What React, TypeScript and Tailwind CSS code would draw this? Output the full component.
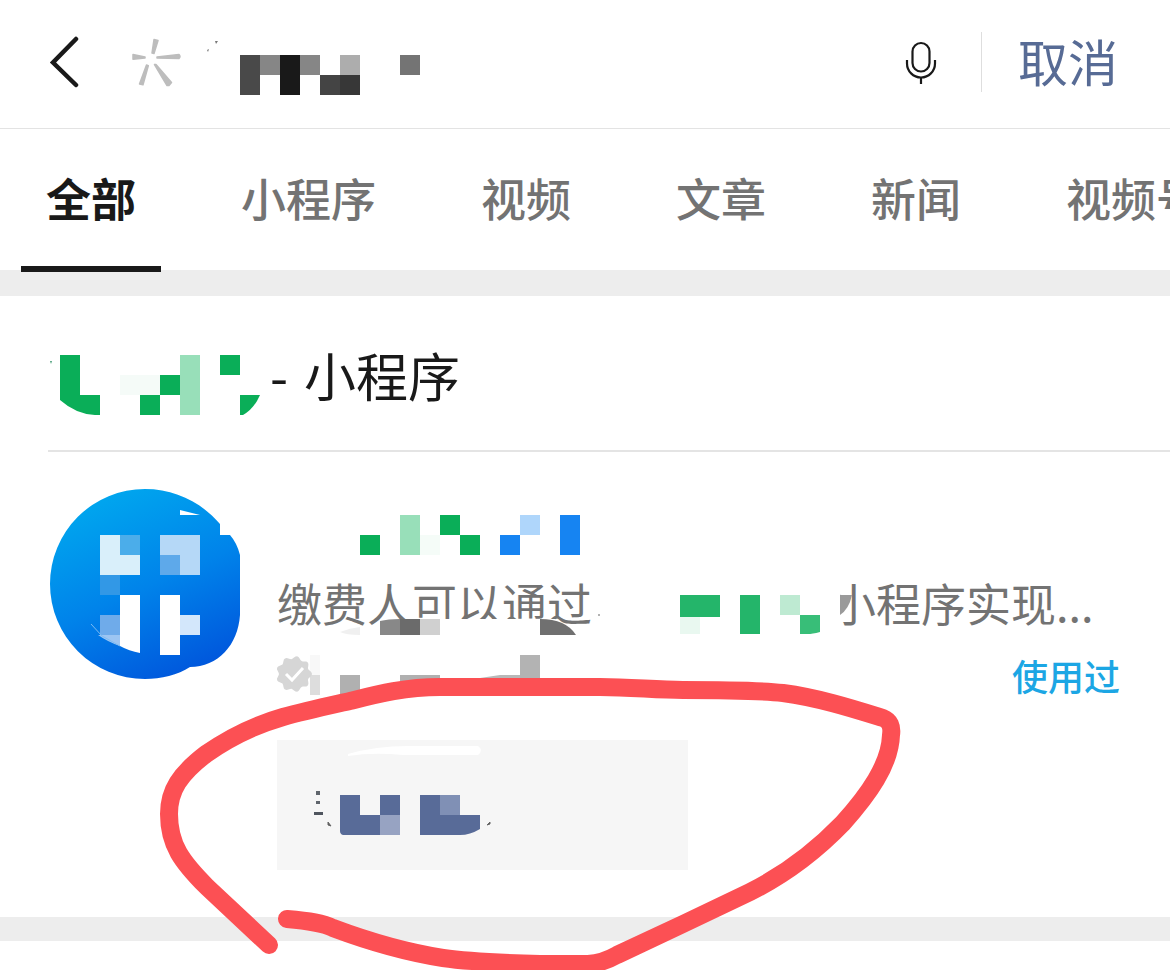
import type { ReactNode } from 'react'
import { useState } from 'react'

type Block = [x: number, y: number, w: number, h: number, fill: string]

const TABS = ['全部', '小程序', '视频', '文章', '新闻', '视频号']

const QUERY_BLOCKS: Block[] = [
  [240, 55, 20, 40, '#494949'],
  [260, 55, 20, 20, '#868686'],
  [280, 55, 20, 40, '#191919'],
  [300, 55, 20, 20, '#868686'],
  [340, 55, 20, 20, '#adadad'],
  [320, 75, 20, 20, '#444444'],
  [340, 75, 20, 20, '#373737'],
  [400, 55, 20, 20, '#747474'],
]

const HEADING_BLOCKS: Block[] = [
  [120, 375, 40, 20, '#f5fbf8'],
  [160, 375, 20, 20, '#0aae58'],
  [140, 395, 20, 20, '#0aae58'],
  [180, 355, 20, 60, '#98dfb9'],
  [220, 355, 20, 20, '#0aae58'],
]

const TITLE_BLOCKS: Block[] = [
  [360, 535, 20, 20, '#0aae58'],
  [400, 515, 20, 40, '#98dfb9'],
  [420, 535, 20, 20, '#f5fcf8'],
  [440, 515, 20, 20, '#0aae58'],
  [460, 535, 20, 20, '#0aae58'],
  [500, 535, 20, 20, '#1684f2'],
  [520, 515, 20, 20, '#afd6fb'],
  [560, 515, 20, 40, '#1684f2'],
]

const DESC_BLOCKS: Block[] = [
  [380, 619, 20, 16, '#888888'],
  [400, 619, 20, 16, '#6b6b6b'],
  [420, 619, 20, 16, '#d0d0d0'],
  [680, 595, 40, 22, '#24b56a'],
  [680, 617, 20, 17, '#e9f8f0'],
  [740, 595, 20, 39, '#24b56a'],
  [780, 595, 20, 20, '#beead2'],
]

const LOGO_BLOCKS: Block[] = [
  [100, 535, 20, 40, '#d9effa'],
  [120, 535, 20, 20, '#4badea'],
  [120, 555, 20, 20, '#d9effa'],
  [160, 535, 40, 20, '#b5d8f7'],
  [180, 555, 20, 20, '#b5d8f7'],
  [160, 555, 20, 20, '#5ea9ea'],
  [100, 575, 20, 20, '#3298e6'],
  [100, 615, 20, 20, '#6fabea'],
  [160, 595, 20, 60, '#ffffff'],
  [180, 615, 20, 20, '#d3e7fb'],
]

const META_BLOCKS: Block[] = [
  [310, 655, 10, 20, '#f8f8f8'],
  [310, 675, 10, 20, '#dddddd'],
  [340, 675, 20, 20, '#b0b0b0'],
  [400, 675, 40, 20, '#b0b0b0'],
  [520, 655, 20, 40, '#b3b3b3'],
]

const ACTION_BLOCKS: Block[] = [
  [380, 795, 20, 20, '#586b98'],
  [380, 815, 20, 20, '#97a3c2'],
  [440, 795, 20, 20, '#8090b5'],
  [316, 791, 4, 4, '#5f656c'],
  [316, 801, 4, 3, '#5f656c'],
  [314, 812, 9, 3, '#4f555e'],
]

function Mosaic({ blocks, viewBox, className, children }: {
  blocks: Block[]
  viewBox: string
  className: string
  children?: ReactNode
}) {
  return (
    <svg viewBox={viewBox} className={className} aria-hidden="true">
      {blocks.map(([x, y, w, h, fill], i) => (
        <rect key={i} x={x} y={y} width={w} height={h} fill={fill} />
      ))}
      {children}
    </svg>
  )
}

function SearchHeader() {
  return (
    <header className="flex h-[129px] items-center border-b border-[#e3e3e3] pr-[52px] pb-1 pl-[49px]">
      <button aria-label="返回" className="shrink-0">
        <svg viewBox="0 0 32 52" className="h-[52px] w-8" fill="none" stroke="#191919" strokeWidth="4.500" strokeLinecap="round">
          <path d="M27 3 4 26.500 27 49" />
        </svg>
      </button>
      <Mosaic blocks={QUERY_BLOCKS} viewBox="130 30 292 64" className="ml-[49px] h-16 w-[292px] shrink-0 overflow-visible">
        <g fill="#bdbdbd" stroke="#bdbdbd" strokeLinejoin="round" strokeWidth="1.500">
          <path d="M154 39.500l4 1-4 13-2-.5z" />
          <path d="M133 54.500l12 2.500v1l-12 1.200z" />
          <path d="M157 57l22-2.500q2 2 0 4l-22-.5z" />
          <path d="M146.500 65l1.800.8-5.300 19-3.500-.8z" />
          <path d="M154.500 64.500l1.500 0 15.500 18-2.500 3-2 0z" />
        </g>
        <path d="M215 41l3 0-2 3zM207 50l2-1-1 3z" fill="#777" />
      </Mosaic>
      <div className="ml-auto flex items-center">
        <button aria-label="语音输入">
          <svg viewBox="904 38 34 48" className="h-12 w-[34px]" fill="none" stroke="#191919" strokeWidth="2.200">
            <rect x="912.500" y="43" width="17" height="28.500" rx="8.500" />
            <path d="M907 60v3.500a14 14 0 0 0 28 0V60M921 77.500V84" />
          </svg>
        </button>
        <div className="mr-9 ml-[43px] h-[60px] w-px bg-[#dedede]" />
        <button className="pb-1 text-[50px] leading-[60px] text-[#576b95]">取消</button>
      </div>
    </header>
  )
}

function Tabs() {
  const [active, setActive] = useState(TABS[0])

  return (
    <nav className="flex h-[141px] gap-[55px] overflow-x-clip pl-[21px]">
      {TABS.map((tab) => (
        <button
          key={tab}
          onClick={() => setActive(tab)}
          className={
            tab === active
              ? '-mb-[2px] shrink-0 border-b-[6px] border-[#191919] px-[25px] text-[45px] leading-[60px] font-bold text-[#191919]'
              : '-mb-[2px] shrink-0 border-b-[6px] border-transparent px-[25px] text-[45px] leading-[60px] font-medium text-[#737373]'
          }
        >
          {tab}
        </button>
      ))}
    </nav>
  )
}

function AppLogo() {
  return (
    <svg viewBox="49 488 192 192" className="size-48 shrink-0" role="img" aria-label="小程序图标">
      <defs>
        <linearGradient id="logo" x1="100" y1="500" x2="180" y2="680" gradientUnits="userSpaceOnUse">
          <stop offset="0" stopColor="#00a5ee" />
          <stop offset="0.500" stopColor="#0083ea" />
          <stop offset="1" stopColor="#0056dc" />
        </linearGradient>
      </defs>
      <path
        d="M145 489C176 489 202 503 220 524V535H230Q237 543 240 555V615C238 645 218 667 190 667C178 675 161 679 145 679A95 95 0 0 1 145 489Z"
        fill="url(#logo)"
      />
      {LOGO_BLOCKS.map(([x, y, w, h, fill], i) => (
        <rect key={i} x={x} y={y} width={w} height={h} fill={fill} />
      ))}
      <path d="M120 595h20v58q-11-2-20-7z" fill="#fff" />
      <path d="M98 635h22v11q-12-4-22-11z" fill="#9dc5f2" />
      <path d="M180 510l20 5-20 0z" fill="#fff" />
      <path d="M91 624l11 12 18 10" stroke="#7dbcf3" fill="none" />
    </svg>
  )
}

// nine-lobed seal outline around the tick
const seal = Array.from({ length: 72 }, (_, i) => {
  const a = (i / 72) * Math.PI * 2
  const r = 16.5 + 1.5 * Math.cos(a * 9)
  return `${(294 + r * Math.cos(a)).toFixed(1)},${(674 + r * Math.sin(a)).toFixed(1)}`
}).join(' ')

function Result() {
  return (
    <article className="flex items-start gap-9 pt-9 pr-[50px] pb-[47px] pl-[49px]">
      <AppLogo />
      <div className="min-w-0 flex-1">
        <Mosaic blocks={TITLE_BLOCKS} viewBox="277 515 310 40" className="mt-[27px] h-10 w-[310px]" />
        <p className="relative mt-[18px] flex text-[45px] leading-[60px] whitespace-nowrap text-[#737373]">
          <span className="w-[554px] shrink-0">缴费人可以通过</span>
          <span>小程序实现...</span>
          <Mosaic blocks={[]} viewBox="277 573 600 64" className="absolute top-0 left-0 h-16 w-[600px]">
            <path d="M385 619H555L566 626V637H385ZM822 580H840V634H822Z" fill="#fff" />
            {DESC_BLOCKS.map(([x, y, w, h, fill], i) => (
              <rect key={i} x={x} y={y} width={w} height={h} fill={fill} />
            ))}
            <path d="M380 619h20q-12 0-20 2z" fill="#fff" />
            <path d="M540 619q26 0 36 16h-36z" fill="#707070" />
            <path d="M340 632q10-4 20-5v8q-14 0-20-3z" fill="#f0f0f0" />
            <path d="M800 615h20v17q-8 2-12 2h-8z" fill="#38be78" />
            <path d="M840 595h12q-3 14-12 20z" fill="#9a9a9a" />
            <circle cx="599" cy="615" r="1" fill="#999" />
          </Mosaic>
        </p>
        <div className="mt-[22px] flex h-10 items-center justify-between">
          <Mosaic blocks={META_BLOCKS} viewBox="277 655 270 40" className="h-10 w-[270px] overflow-visible">
            <path d="M480 678l20-3h20v20h-40z" fill="#b8b8b8" />
            <polygon points={seal} fill="#d6d6d6" />
            <path d="M286 674l6 6 11-12" fill="none" stroke="#fff" strokeWidth="3" />
          </Mosaic>
          <a href="#used" className="text-[36px] leading-10 font-medium text-[#1ca6e4]">使用过</a>
        </div>
        <button aria-label="进入小程序" className="mt-[45px] block h-[130px] w-[411px] max-w-full bg-[#f6f6f6]">
          <Mosaic blocks={ACTION_BLOCKS} viewBox="277 740 411 130" className="h-[130px] w-[411px]">
            <path d="M340 795h20v20h20v20h-37q-3-1-3-4z" fill="#586b98" />
            <path d="M420 795h20v20h40v14q-10 6-20 6h-40z" fill="#586b98" />
            <path d="M348 754q28-8 60-8h70q6 4 0 9h-75q-30-3-55 1z" fill="#fff" />
            <path d="M328 822l3 4-3-1zM487 825l3-3 0 2z" fill="#555" stroke="#666" />
          </Mosaic>
        </button>
      </div>
    </article>
  )
}

function CircleMark() {
  return (
    <svg
      viewBox="150 670 760 300"
      className="pointer-events-none absolute top-[670px] left-[150px] h-[300px] w-[760px]"
      fill="none"
      stroke="#fc5054"
      strokeWidth="18"
      strokeLinecap="round"
      strokeLinejoin="round"
      aria-hidden="true"
    >
      <path d="M269 945L207 887C182 862 169 845 169 814C169 790 180 774 206 754C229 738 255 725 283 717C305 711 328 706 350 701C378 694 405 687 440 687H600C632 687 655 690 683 690C725 690 755 690 783 693C820 698 854 709 883 718Q893 722 891 735C890 765 868 795 843 823C815 852 784 875 750 892L683 924L617 955Q603 963 588 964H540C500 963 470 962 443 958C405 952 365 940 333 928C323 923 310 921 287 919" />
    </svg>
  )
}

export default function App() {
  return (
    <div className="relative min-h-screen overflow-hidden bg-white font-['Noto_Sans_CJK_SC',sans-serif]">
      <SearchHeader />
      <Tabs />
      <main>
        <section className="border-t-[26px] border-[#ededed]">
          <h2 className="ml-12 flex h-[156px] items-center border-b-2 border-[#e4e4e4] pt-[3px] text-[52px] leading-[60px] font-normal text-[#191919]">
            <Mosaic blocks={HEADING_BLOCKS} viewBox="48 335 222 80" className="h-20 w-[222px] shrink-0">
              <path d="M60 355h20v40h20v20q-22 1-40-15z" fill="#0aae58" />
              <path d="M240 395h20q-6 14-17 20h-3z" fill="#0aae58" />
              <path d="M50 361h2l-1 3z" fill="#4a9f7a" />
            </Mosaic>
            <span className="flex gap-4">
              <span>-</span>
              <span>小程序</span>
            </span>
          </h2>
          <Result />
        </section>
        <div className="h-6 bg-[#ededed]" />
      </main>
      <CircleMark />
    </div>
  )
}
